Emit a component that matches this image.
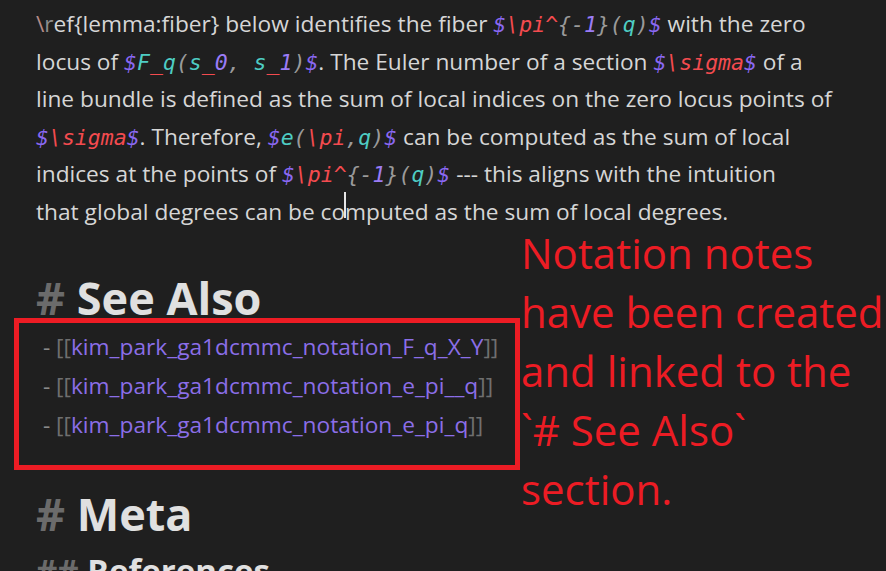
import React from "react";

const body = { fontFamily: '"Open Sans", "Noto Sans", sans-serif' };
const mono = { fontFamily: '"DejaVu Sans Mono", "Liberation Mono", monospace' };

// math spans, token by token
function M({ parts }) {
  const colors = {
    d: "text-[#8a68f2]",
    c: "text-[#4ecdc4]",
    r: "text-[#f44b4f]",
    g: "text-[#9a9a9a]",
    n: "text-[#9b7cf6]",
  };
  return (
    <span className="text-[21.5px] italic leading-none" style={mono}>
      {parts.map(([k, t], i) => (
        <span key={i} className={colors[k]}>{t}</span>
      ))}
    </span>
  );
}

const piInv = [["d", "$"], ["r", "\\pi^"], ["g", "{-"], ["n", "1"], ["g", "}("], ["c", "q"], ["g", ")"], ["d", "$"]];
const sigma = [["d", "$"], ["r", "\\sigma"], ["d", "$"]];

const links = [
  "kim_park_ga1dcmmc_notation_F_q_X_Y",
  "kim_park_ga1dcmmc_notation_e_pi__q",
  "kim_park_ga1dcmmc_notation_e_pi_q",
];

export default function App() {
  return (
    <div className="relative h-[571px] w-[886px] overflow-hidden bg-[#1f1f1f] text-[#d6d6d6]" style={body}>
      <div className="pl-[36px] pt-[5px] text-[22.7px] leading-[37.5px]">
        <div className="h-[37.5px] whitespace-nowrap">
          <span className="text-[#b58a86]">\</span>
          <span className="text-[#8c8c8c]">r</span>ef{"{"}lemma:fiber{"}"} below identifies the fiber <M parts={piInv} /> with the zero
        </div>
        <div className="h-[37.5px] whitespace-nowrap">
          locus of{" "}
          <M
            parts={[
              ["d", "$"], ["c", "F"], ["r", "_"], ["c", "q"], ["g", "("], ["c", "s"], ["r", "_"], ["n", "0"],
              ["g", ", "], ["c", "s"], ["r", "_"], ["n", "1"], ["g", ")"], ["d", "$"],
            ]}
          />
          . The Euler number of a section <M parts={sigma} /> of a
        </div>
        <div className="h-[37.5px] whitespace-nowrap">line bundle is defined as the sum of local indices on the zero locus points of</div>
        <div className="h-[37.5px] whitespace-nowrap">
          <M parts={sigma} />. Therefore,{" "}
          <M parts={[["d", "$"], ["c", "e"], ["g", "("], ["r", "\\pi"], ["g", ","], ["c", "q"], ["g", ")"], ["d", "$"]]} /> can be
          computed as the sum of local
        </div>
        <div className="h-[37.5px] whitespace-nowrap">
          indices at the points of <M parts={piInv} /> --- this aligns with the intuition
        </div>
        <div className="h-[37.5px] whitespace-nowrap">
          that global degrees can be co
          <span className="relative">
            <span className="absolute -left-[1px] top-[-4px] h-[26px] w-[2px] bg-[#e6e6e6]" />
          </span>
          mputed as the sum of local degrees.
        </div>

        <h1 className="mt-[43px] text-[45px] font-bold leading-[50px]">
          <span className="text-[#6b6b6b]"># </span>
          <span className="text-[#e0e0e0]">See Also</span>
        </h1>

        <div className="-ml-[22px] mt-[-5px] w-[506px] border-[5px] border-[#ec1c24] pb-[21px] pl-[18px] pt-[4px]">
          {links.map((l) => (
            <div key={l} className="whitespace-nowrap leading-[39px]">
              <span className="text-[#8a8a8a]">&nbsp;-&nbsp;</span>
              <span className="text-[#6f6f6f]">[[</span>
              <span className="text-[#8b6ee8]">{l}</span>
              <span className="text-[#6f6f6f]">]]</span>
            </div>
          ))}
        </div>

        <h1 className="mt-[19px] text-[45px] font-bold leading-[50px]">
          <span className="text-[#6b6b6b]"># </span>
          <span className="text-[#e0e0e0]">Meta</span>
        </h1>
        <h2 className="mt-[12px] text-[33px] font-bold leading-[40px]">
          <span className="text-[#6b6b6b]">## </span>
          <span className="text-[#e0e0e0]">References</span>
        </h2>
      </div>

      <div className="absolute left-[521px] top-[223px] text-[42px] leading-[59px] text-[#ec1c24]">
        <div>Notation notes</div>
        <div className="whitespace-nowrap">have been created</div>
        <div>and linked to the</div>
        <div>`# See Also`</div>
        <div>section.</div>
      </div>
    </div>
  );
}
